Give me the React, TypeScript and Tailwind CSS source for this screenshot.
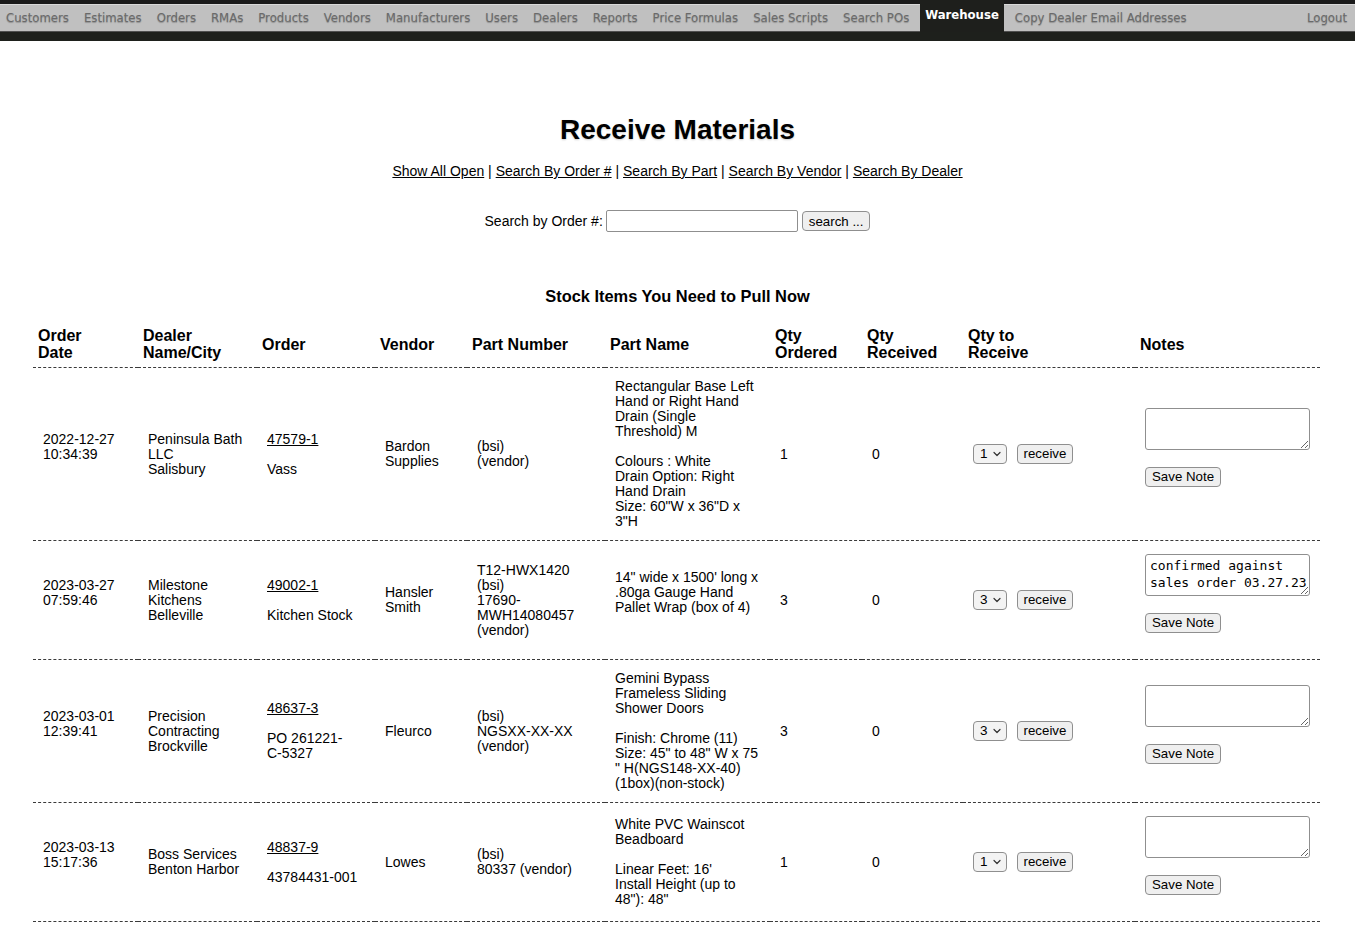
import React from "react";

const navItems = [
  "Customers",
  "Estimates",
  "Orders",
  "RMAs",
  "Products",
  "Vendors",
  "Manufacturers",
  "Users",
  "Dealers",
  "Reports",
  "Price Formulas",
  "Sales Scripts",
  "Search POs",
];

type Row = {
  date: string[];
  dealer: string[];
  order: string;
  orderExtra: string[];
  vendor: string[];
  partNumber: string[];
  partName: string[];
  qtyOrdered: string;
  qtyReceived: string;
  qtyToReceive: string;
  note: string;
};

const rows: Row[] = [
  {
    date: ["2022-12-27", "10:34:39", ""],
    dealer: ["Peninsula Bath", "LLC", "Salisbury"],
    order: "47579-1",
    orderExtra: ["Vass"],
    vendor: ["Bardon", "Supplies"],
    partNumber: ["(bsi)", "(vendor)"],
    partName: [
      "Rectangular Base Left",
      "Hand or Right Hand",
      "Drain (Single",
      "Threshold) M",
      "",
      "Colours : White",
      "Drain Option: Right",
      "Hand Drain",
      'Size: 60"W x 36"D x',
      '3"H',
    ],
    qtyOrdered: "1",
    qtyReceived: "0",
    qtyToReceive: "1",
    note: "",
  },
  {
    date: ["2023-03-27", "07:59:46", ""],
    dealer: ["Milestone", "Kitchens", "Belleville"],
    order: "49002-1",
    orderExtra: ["Kitchen Stock"],
    vendor: ["Hansler", "Smith"],
    partNumber: ["T12-HWX1420", "(bsi)", "17690-", "MWH14080457", "(vendor)"],
    partName: ["14\" wide x 1500' long x", ".80ga Gauge Hand", "Pallet Wrap (box of 4)", ""],
    qtyOrdered: "3",
    qtyReceived: "0",
    qtyToReceive: "3",
    note: "confirmed against sales order 03.27.23",
  },
  {
    date: ["2023-03-01", "12:39:41", ""],
    dealer: ["Precision", "Contracting", "Brockville"],
    order: "48637-3",
    orderExtra: ["PO 261221-", "C-5327"],
    vendor: ["Fleurco"],
    partNumber: ["(bsi)", "NGSXX-XX-XX", "(vendor)"],
    partName: [
      "Gemini Bypass",
      "Frameless Sliding",
      "Shower Doors",
      "",
      "Finish: Chrome (11)",
      'Size: 45" to 48" W x 75',
      '" H(NGS148-XX-40)',
      "(1box)(non-stock)",
    ],
    qtyOrdered: "3",
    qtyReceived: "0",
    qtyToReceive: "3",
    note: "",
  },
  {
    date: ["2023-03-13", "15:17:36", ""],
    dealer: ["Boss Services", "Benton Harbor"],
    order: "48837-9",
    orderExtra: ["43784431-001"],
    vendor: ["Lowes"],
    partNumber: ["(bsi)", "80337 (vendor)"],
    partName: [
      "White PVC Wainscot",
      "Beadboard",
      "",
      "Linear Feet: 16'",
      "Install Height (up to",
      '48"): 48"',
    ],
    qtyOrdered: "1",
    qtyReceived: "0",
    qtyToReceive: "1",
    note: "",
  },
];

function Lines({ lines }: { lines: string[] }) {
  return (
    <>
      {lines.map((l, i) => (
        <div key={i} className="whitespace-nowrap">
          {l === "" ? "\u00a0" : l}
        </div>
      ))}
    </>
  );
}

function Btn({ children }: { children: React.ReactNode }) {
  return (
    <button
      type="button"
      className="inline-flex h-[20px] items-center rounded-[4px] border border-[#8f8f8f] bg-[#efefef] px-[6px] text-[13.3px] leading-none text-black [font-family:'Liberation_Sans',Arial,sans-serif]"
    >
      {children}
    </button>
  );
}

function FakeSelect({ value }: { value: string }) {
  return (
    <span className="inline-flex h-[20px] items-center gap-[5px] rounded-[4px] border border-[#8f8f8f] bg-[#f3f3f3] pl-[6px] pr-[5px] text-[13.5px] leading-none text-black">
      <span>{value}</span>
      <svg width="8" height="6" viewBox="0 0 8 6" fill="none">
        <path d="M1 1.5 L4 4.5 L7 1.5" stroke="#333" strokeWidth="1.2" strokeLinecap="round" strokeLinejoin="round" />
      </svg>
    </span>
  );
}

const colWidths = [105, 119, 118, 92, 138, 165, 92, 101, 172, 185];

const headers: string[][] = [
  ["Order", "Date"],
  ["Dealer", "Name/City"],
  ["Order"],
  ["Vendor"],
  ["Part Number"],
  ["Part Name"],
  ["Qty", "Ordered"],
  ["Qty", "Received"],
  ["Qty to", "Receive"],
  ["Notes"],
];

export default function App() {
  const td = "border-b border-dashed border-[#3a3a3a] px-[10px] py-[11px] align-middle text-[14px] leading-[15px]";
  return (
    <div className="min-h-[950px] bg-white text-black [font-family:'Liberation_Sans',Arial,Helvetica,sans-serif]">
      {/* Navigation */}
      <div className="w-full">
        <div className="flex h-[32px] items-stretch bg-[linear-gradient(to_bottom,#1b1b1b_0px,#1b1b1b_4px,#d9d9d9_4px,#d9d9d9_5px,#c0c0c0_5px,#c0c0c0_31px,#505050_31px,#505050_32px)] pl-[6px] pr-[8px] text-[13px] [font-family:'DejaVu_Sans_Condensed','DejaVu_Sans',sans-serif]">
          <div className="flex items-stretch gap-[15px]">
            {navItems.map((n) => (
              <span
                key={n}
                className="flex items-center whitespace-nowrap pt-[4px] text-[#6a6a6a] [text-shadow:0_1px_1px_rgba(0,0,0,0.25)]"
              >
                {n}
              </span>
            ))}
            <span className="-mx-[4px] flex items-center whitespace-nowrap bg-[#1e1f1c] px-[5px] pb-[3px] font-bold text-white">
              Warehouse
            </span>
            <span className="flex items-center whitespace-nowrap pt-[4px] text-[#6a6a6a] [text-shadow:0_1px_1px_rgba(0,0,0,0.25)]">
              Copy Dealer Email Addresses
            </span>
          </div>
          <span className="ml-auto flex items-center whitespace-nowrap pt-[4px] text-[#6a6a6a] [text-shadow:0_1px_1px_rgba(0,0,0,0.25)]">
            Logout
          </span>
        </div>
        <div className="h-[9px] bg-[#1e201c]" />
      </div>

      {/* Title */}
      <h1 className="mt-[73px] text-center text-[28px] font-bold leading-[32px] [text-shadow:0_1px_2px_rgba(0,0,0,0.2)]">
        Receive Materials
      </h1>

      <div className="mt-[17px] text-center text-[14px] leading-[16px]">
        <a className="underline" href="#">Show All Open</a> |{" "}
        <a className="underline" href="#">Search By Order #</a> |{" "}
        <a className="underline" href="#">Search By Part</a> |{" "}
        <a className="underline" href="#">Search By Vendor</a> |{" "}
        <a className="underline" href="#">Search By Dealer</a>
      </div>

      <div className="mt-[31px] flex items-center justify-center text-[14px]">
        <span>Search by Order #:</span>
        <input
          type="text"
          className="ml-[3px] h-[22px] w-[192px] rounded-[2px] border border-[#8f8f8f] bg-white px-[3px] outline-none"
        />
        <span className="ml-[4px]">
          <Btn>search ...</Btn>
        </span>
      </div>

      <div className="mt-[55px] text-center text-[16.4px] font-bold leading-[18px]">
        Stock Items You Need to Pull Now
      </div>

      <table className="ml-[33px] mt-[16px] w-[1287px] table-fixed border-separate border-spacing-0">
        <colgroup>
          {colWidths.map((w, i) => (
            <col key={i} style={{ width: w }} />
          ))}
        </colgroup>
        <thead>
          <tr>
            {headers.map((h, i) => (
              <th
                key={i}
                className="border-b border-dashed border-[#3a3a3a] px-[5px] py-[6px] text-left align-middle text-[16px] font-bold leading-[17px]"
              >
                <Lines lines={h} />
              </th>
            ))}
          </tr>
        </thead>
        <tbody>
          {rows.map((r, i) => (
            <tr key={i}>
              <td className={td}>
                <Lines lines={r.date} />
              </td>
              <td className={td}>
                <Lines lines={r.dealer} />
              </td>
              <td className={td}>
                <div className="whitespace-nowrap">
                  <a href="#" className="underline">
                    {r.order}
                  </a>
                </div>
                <div>{"\u00a0"}</div>
                <Lines lines={r.orderExtra} />
              </td>
              <td className={td}>
                <Lines lines={r.vendor} />
              </td>
              <td className={td}>
                <Lines lines={r.partNumber} />
              </td>
              <td className={td}>
                <Lines lines={r.partName} />
              </td>
              <td className={td}>{r.qtyOrdered}</td>
              <td className={td}>{r.qtyReceived}</td>
              <td className={td}>
                <div className="flex items-center gap-[10px]">
                  <FakeSelect value={r.qtyToReceive} />
                  <Btn>receive</Btn>
                </div>
              </td>
              <td className={td}>
                <div className="pb-[15px] pt-[2px]">
                  <textarea
                    defaultValue={r.note}
                    className="block h-[42px] w-[165px] rounded-[3px] border border-[#8f8f8f] bg-white pb-[2px] pl-[4px] pr-[0px] pt-[2px] text-[13px] leading-[17px] text-black outline-none [font-family:'DejaVu_Sans_Mono',monospace]"
                  />
                  <div className="mt-[17px]">
                    <Btn>Save Note</Btn>
                  </div>
                </div>
              </td>
            </tr>
          ))}
        </tbody>
      </table>
    </div>
  );
}
